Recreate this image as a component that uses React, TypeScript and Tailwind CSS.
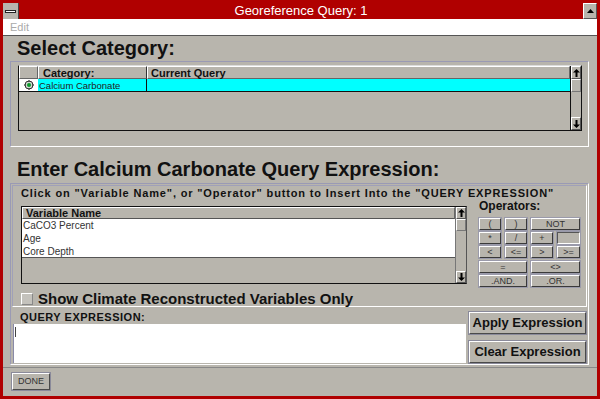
import React from "react";

const FONT = { fontFamily: '"Liberation Sans", Arial, Helvetica, sans-serif' };

function Raised({ children, className = "" }: { children?: React.ReactNode; className?: string }) {
  return (
    <div
      className={`flex items-center justify-center bg-[#b8b5ad] border border-t-white border-l-white border-r-[#4a4a4a] border-b-[#4a4a4a] shadow-[0_0_0_1px_#8a8a9a] ${className}`}
    >
      {children}
    </div>
  );
}

function ArrowBox({ dir, className = "" }: { dir: "up" | "down"; className?: string }) {
  return (
    <div className={`flex items-center justify-center bg-[#b8b5ad] border border-t-white border-l-white border-r-[#555] border-b-[#555] ${className}`}>
      <svg width="7" height="8" viewBox="0 0 7 8">
        {dir === "up" ? (
          <path d="M3.5 0 L7 3.5 H4.5 V8 H2.5 V3.5 H0 Z" fill="#000" />
        ) : (
          <path d="M3.5 8 L7 4.5 H4.5 V0 H2.5 V4.5 H0 Z" fill="#000" />
        )}
      </svg>
    </div>
  );
}

function OpBtn({ label, w, pressed }: { label: string; w: string; pressed?: boolean }) {
  return (
    <div
      className={`${w} h-[12px] flex items-center justify-center text-[9px] leading-none text-[#333] border ${
        pressed
          ? "border-t-[#555] border-l-[#555] border-r-white border-b-white"
          : "border-t-white border-l-white border-r-[#3a3a3a] border-b-[#3a3a3a]"
      } shadow-[0_0_0_1px_#9a9aaa]`}
    >
      {label}
    </div>
  );
}

export default function App() {
  return (
    <div className="w-[600px] h-[399px] bg-[#b00000] p-[3px] flex flex-col overflow-hidden" style={FONT}>
      {/* title bar */}
      <div className="h-[16px] flex items-stretch">
        <div className="w-[16px] bg-[#b8b5ad] flex items-center justify-center border-r border-[#444]">
          <div className="w-[11px] h-[3px] bg-white border border-[#222]" />
        </div>
        <div className="flex-1 text-center text-white text-[13px] leading-[16px]">Georeference Query: 1</div>
        <div className="w-[14px] bg-[#b8b5ad] flex items-center justify-center border border-t-white border-l-white border-r-[#555] border-b-[#555]">
          <svg width="7" height="4" viewBox="0 0 7 4">
            <path d="M3.5 0 L7 4 H0 Z" fill="#000" />
          </svg>
        </div>
      </div>

      {/* menu bar */}
      <div className="h-[17px] bg-white border-b border-[#555] flex items-center pl-[7px]">
        <span className="text-[11px] text-[#aaa]">Edit</span>
      </div>

      {/* body */}
      <div className="flex-1 bg-[#b8b5ad] flex flex-col">
        <div className="h-[25px] pl-[14px] pt-[1px] text-[20px] font-bold leading-[22px] text-[#111]">Select Category:</div>

        {/* category panel */}
        <div className="ml-[7px] w-[579px] h-[86px] border border-t-[#9a9ab4] border-l-[#9a9ab4] border-r-white border-b-white pl-[7px] pt-[3px]">
          <div className="w-[564px] h-[66px] flex border border-[#111] border-t-[#dcdcdc]">
            <div className="flex-1 flex flex-col">
              <div className="h-[13px] flex text-[11px] font-bold leading-[12px] text-[#111]">
                <div className="w-[19px] border border-t-white border-l-white border-r-[#666] border-b-[#666]" />
                <div className="w-[109px] pl-[4px] border border-t-white border-l-white border-r-[#333] border-b-[#666]">Category:</div>
                <div className="flex-1 pl-[3px] border border-t-white border-l-white border-r-[#666] border-b-[#666]">Current Query</div>
              </div>
              <div className="h-[13px] flex border-b border-[#111]">
                <div className="w-[19px] bg-white flex items-center justify-center">
                  <svg width="10" height="10" viewBox="0 0 10 10">
                    <circle cx="5" cy="5" r="4" fill="#cfd8cf" stroke="#333" strokeWidth="1" />
                    <circle cx="5" cy="5" r="2" fill="#0a9a2a" />
                    <path d="M5 0 V2 M5 8 V10 M0 5 H2 M8 5 H10" stroke="#333" strokeWidth="1" />
                  </svg>
                </div>
                <div className="w-[109px] bg-[#00ffff] pl-[1px] text-[9.5px] leading-[13px] text-[#222] border-r border-[#111]">Calcium Carbonate</div>
                <div className="flex-1 bg-[#00ffff]" />
              </div>
              <div className="flex-1" />
            </div>
            <div className="w-[11px] flex flex-col border-l border-[#111]">
              <ArrowBox dir="up" className="h-[13px]" />
              <div className="h-[13px] border border-t-white border-l-white border-r-[#777] border-b-[#777]" />
              <div className="flex-1" />
              <ArrowBox dir="down" className="h-[13px]" />
            </div>
          </div>
        </div>

        <div className="h-[36px] pl-[14px] pt-[11px] text-[20px] font-bold leading-[22px] text-[#111]">
          Enter Calcium Carbonate Query Expression:
        </div>

        {/* query panel */}
        <div className="ml-[7px] w-[579px] h-[182px] border border-t-[#9a9ab4] border-l-[#9a9ab4] border-r-white border-b-white flex flex-col">
          <div className="ml-[1px] mt-[1px] w-[575px] h-[122px] border border-t-[#a0a0b8] border-l-[#a0a0b8] border-r-white border-b-white flex flex-col pl-[8px]">
            <div className="h-[20px] text-[11px] font-bold leading-[12px] tracking-[0.85px] text-[#111] pt-[1px] whitespace-nowrap">
              Click on "Variable Name", or "Operator" button to Insert Into the "QUERY EXPRESSION"
            </div>
            <div className="flex">
              {/* variable list */}
              <div className="w-[446px] h-[78px] flex border border-[#111] border-r-[#555]">
                <div className="flex-1 flex flex-col">
                  <div className="h-[12px] bg-[#b8b5ad] border border-t-white border-l-white border-r-[#666] border-b-[#555] text-[11px] font-bold leading-[10px] text-[#111] pl-[3px]">
                    Variable Name
                  </div>
                  <div className="h-[39px] bg-white flex flex-col text-[10px] leading-[13px] text-[#333] pl-[1px] border-b border-[#555]">
                    <div>CaCO3 Percent</div>
                    <div>Age</div>
                    <div>Core Depth</div>
                  </div>
                  <div className="flex-1" />
                </div>
                <div className="w-[11px] flex flex-col border-l border-[#777]">
                  <ArrowBox dir="up" className="h-[12px]" />
                  <div className="h-[12px] border border-t-white border-l-white border-r-[#777] border-b-[#777]" />
                  <div className="flex-1" />
                  <ArrowBox dir="down" className="h-[12px]" />
                </div>
              </div>

              {/* operators */}
              <div className="ml-[12px] flex flex-col">
                <div className="h-[16px] text-[12px] font-bold leading-[14px] text-[#111] -mt-[7px] mb-[3px]">Operators:</div>
                <div className="flex flex-col gap-[2px]">
                  <div className="flex gap-[4px]">
                    <OpBtn label="(" w="w-[22px]" />
                    <OpBtn label=")" w="w-[22px]" />
                    <OpBtn label="NOT" w="w-[49px]" />
                  </div>
                  <div className="flex gap-[4px]">
                    <OpBtn label="*" w="w-[22px]" />
                    <OpBtn label="/" w="w-[22px]" />
                    <OpBtn label="+" w="w-[22px]" />
                    <OpBtn label="" w="w-[23px]" pressed />
                  </div>
                  <div className="flex gap-[4px]">
                    <OpBtn label="<" w="w-[22px]" />
                    <OpBtn label="<=" w="w-[22px]" />
                    <OpBtn label=">" w="w-[22px]" />
                    <OpBtn label=">=" w="w-[23px]" />
                  </div>
                  <div className="flex gap-[4px] mt-[1px]">
                    <OpBtn label="=" w="w-[48px]" />
                    <OpBtn label="<>" w="w-[49px]" />
                  </div>
                  <div className="flex gap-[4px]">
                    <OpBtn label=".AND." w="w-[48px]" />
                    <OpBtn label=".OR." w="w-[49px]" />
                  </div>
                </div>
              </div>
            </div>
            <div className="flex items-center mt-[4px] h-[15px]">
              <div className="w-[12px] h-[12px] border border-t-white border-l-white border-r-[#888] border-b-[#888] bg-[#c4c2bc]" />
              <span className="ml-[5px] text-[15px] font-bold leading-[16px] text-[#111] whitespace-nowrap">Show Climate Reconstructed Variables Only</span>
            </div>
          </div>

          <div className="flex flex-1">
            <div className="w-[455px] flex flex-col">
              <div className="h-[17px] pl-[9px] pt-[4px] text-[11px] font-bold leading-[12px] tracking-[0.5px] text-[#111]">QUERY EXPRESSION:</div>
              <div className="flex-1 ml-[2px] mb-[1px] bg-white border-l border-[#8a8aa8] pl-[1px] pt-[3px]">
                <div className="w-[1px] h-[10px] bg-[#444]" />
              </div>
            </div>
            <div className="ml-[3px] flex flex-col gap-[7px] pt-[5px]">
              <Raised className="w-[117px] h-[22px] text-[13px] font-bold text-[#111]">Apply Expression</Raised>
              <Raised className="w-[117px] h-[22px] text-[13px] font-bold text-[#111]">Clear Expression</Raised>
            </div>
          </div>
        </div>

        <div className="mt-[2px] border-t border-[#888]" />
        <div className="pl-[9px] pt-[5px]">
          <Raised className="w-[38px] h-[17px] text-[9px] text-[#333]">DONE</Raised>
        </div>
      </div>
    </div>
  );
}
